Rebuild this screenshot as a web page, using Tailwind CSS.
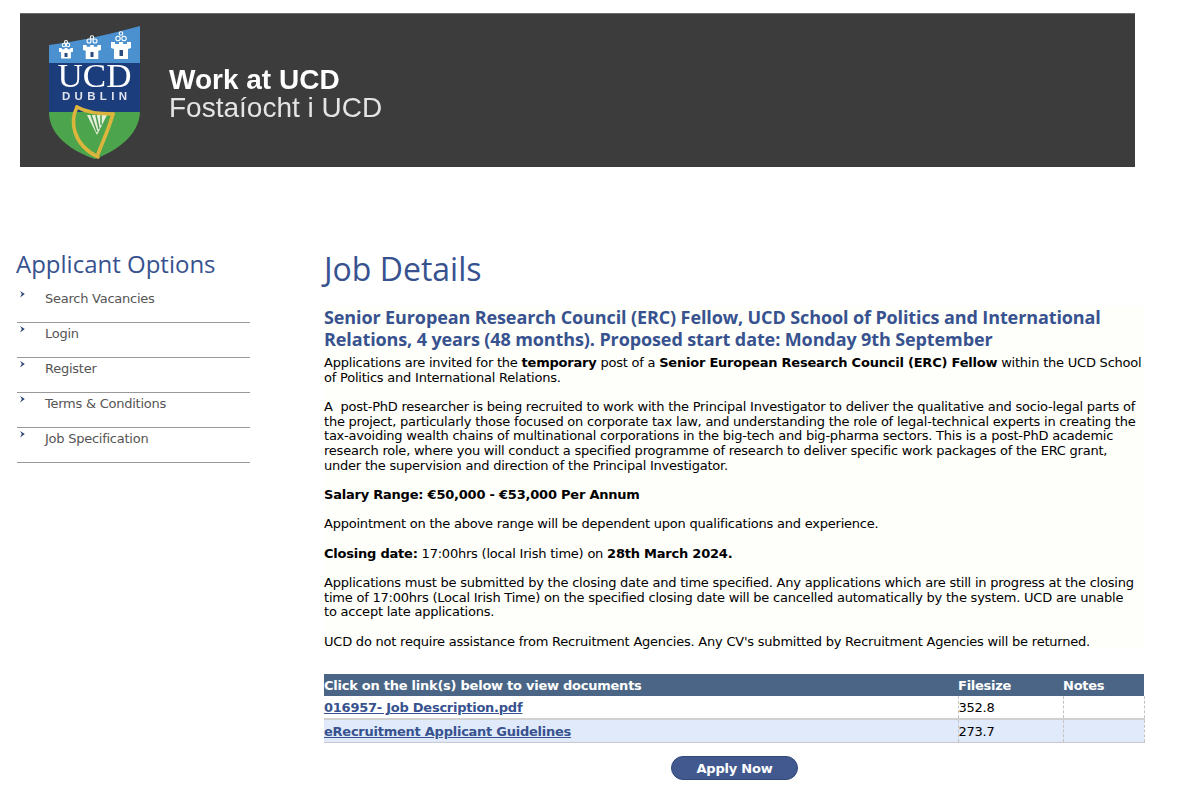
<!DOCTYPE html>
<html lang="en">
<head>
<meta charset="utf-8">
<title>Job Details</title>
<script src="https://cdn.jsdelivr.net/npm/@tailwindcss/browser@4"></script>
</head>
<body class="bg-white font-['DejaVu_Sans',sans-serif] text-black overflow-hidden">
<div class="w-[1200px] h-[810px] overflow-hidden">
  <header class="ml-5 mt-[13px] w-[1115px] h-[154px] bg-[#3c3c3c] flex items-start border-t border-[#6a6a6a]">
    <svg class="ml-[28px] mt-[12px] shrink-0 blur-[0.4px]" width="93" height="136" viewBox="0 0 93 136" aria-label="UCD Dublin crest">
      <defs><clipPath id="shield"><path d="M1 19 Q42 14 92 0 L92 86 C91 110 68 125 47 133 C24 125 1 110 1 86 Z"/></clipPath></defs>
      <g clip-path="url(#shield)">
        <rect width="93" height="37" fill="#4b91cf"/>
        <rect y="37" width="93" height="49" fill="#1c3d7c"/>
        <rect y="86" width="93" height="50" fill="#4ca54c"/>
      </g>
      <g fill="#fff">
        <path transform="translate(11,22) scale(0.7,0.62)" d="M0 0 H4 V2 H8 V0 H12 V2 H16 V0 H20 V6 L17 7 V17 H3 V7 L0 6 Z"/>
        <path transform="translate(35,19) scale(0.9,0.82)" d="M0 0 H4 V2 H8 V0 H12 V2 H16 V0 H20 V6 L17 7 V17 H3 V7 L0 6 Z"/>
        <path transform="translate(63,16)" d="M0 0 H4 V2 H8 V0 H12 V2 H16 V0 H20 V6 L17 7 V17 H3 V7 L0 6 Z"/>
      </g>
      <g fill="#2a4a80">
        <rect x="16.500" y="27" width="3" height="4"/>
        <rect x="42.500" y="26" width="3" height="5"/>
        <rect x="71.500" y="24" width="3.500" height="6"/>
      </g>
      <g fill="none" stroke="#fff" stroke-width="1.100">
        <circle cx="16" cy="19" r="1.700"/><circle cx="20" cy="19" r="1.700"/><circle cx="18" cy="16" r="1.500"/>
        <circle cx="41" cy="15" r="2"/><circle cx="47" cy="15" r="2"/><circle cx="44" cy="11.500" r="1.700"/>
        <circle cx="70" cy="12.500" r="2.200"/><circle cx="76" cy="12.500" r="2.200"/><circle cx="73" cy="7.500" r="1.800"/>
      </g>
      <text x="46.500" y="61" text-anchor="middle" fill="#fff" font-family="'Liberation Serif',serif" font-size="33" textLength="74" lengthAdjust="spacingAndGlyphs">UCD</text>
      <text x="46.500" y="74" text-anchor="middle" fill="#dfe3ee" font-family="'Liberation Sans',sans-serif" font-weight="700" font-size="11.500" textLength="65" lengthAdjust="spacing">DUBLIN</text>
      <path d="M39 89 H59 L49 109 Z" fill="#e6f0dc"/>
      <g stroke="#4f9c50" stroke-width="1.500"><path d="M43 89 L49 106"/><path d="M48 89 L51 103"/><path d="M53 89 L53 99"/></g>
      <g fill="none" stroke="#dcb63c" stroke-width="3.600" stroke-linecap="round">
        <path d="M29 81 C36 85 50 88 65 88"/>
        <path d="M29 81 C22 95 24 118 50 131"/>
        <path d="M65 88 C60 105 55 115 50 128"/>
      </g>
    </svg>
    <div class="ml-7 mt-[52px] font-['Liberation_Sans',sans-serif] text-white leading-[28px] blur-[0.3px]">
      <div class="text-[28px] font-bold">Work at UCD</div>
      <div class="text-[28px] text-[#e4e4e4]">Fostaíocht i UCD</div>
    </div>
  </header>

  <div class="flex mt-[79px]">
    <aside class="w-[324px] shrink-0 pl-4">
      <h2 class="font-['Open_Sans',sans-serif] text-[24px] leading-[36px] text-[#37528f]">Applicant Options</h2>
      <ul class="w-[233px] mt-[6px] ml-[1px] text-[13px] tracking-[-0.25px] text-[#555]">
        <li class="h-[35px] border-b border-[#999] flex items-start pl-[3px]"><svg class="mt-[3px]" width="5" height="7" viewBox="0 0 5 7"><path d="M0 0 L4.800 3 L0 6.500 L1.800 3 Z" fill="#2c4478"/></svg><span class="ml-5 leading-[16px] mt-[3px]">Search Vacancies</span></li>
        <li class="h-[35px] border-b border-[#999] flex items-start pl-[3px]"><svg class="mt-[3px]" width="5" height="7" viewBox="0 0 5 7"><path d="M0 0 L4.800 3 L0 6.500 L1.800 3 Z" fill="#2c4478"/></svg><span class="ml-5 leading-[16px] mt-[3px]">Login</span></li>
        <li class="h-[35px] border-b border-[#999] flex items-start pl-[3px]"><svg class="mt-[3px]" width="5" height="7" viewBox="0 0 5 7"><path d="M0 0 L4.800 3 L0 6.500 L1.800 3 Z" fill="#2c4478"/></svg><span class="ml-5 leading-[16px] mt-[3px]">Register</span></li>
        <li class="h-[35px] border-b border-[#999] flex items-start pl-[3px]"><svg class="mt-[3px]" width="5" height="7" viewBox="0 0 5 7"><path d="M0 0 L4.800 3 L0 6.500 L1.800 3 Z" fill="#2c4478"/></svg><span class="ml-5 leading-[16px] mt-[3px]">Terms &amp; Conditions</span></li>
        <li class="h-[35px] border-b border-[#999] flex items-start pl-[3px]"><svg class="mt-[3px]" width="5" height="7" viewBox="0 0 5 7"><path d="M0 0 L4.800 3 L0 6.500 L1.800 3 Z" fill="#2c4478"/></svg><span class="ml-5 leading-[16px] mt-[3px]">Job Specification</span></li>
      </ul>
    </aside>

    <main class="w-[820px] shrink-0 mt-[1px]">
      <h1 class="font-['Open_Sans',sans-serif] text-[32px] leading-[44px] text-[#37528f]">Job Details</h1>
      <div class="mt-[15px] bg-[#fefefa] w-[820px]">
        <h3 class="text-[18px] leading-[22px] font-bold tracking-[-0.11px] font-['Open_Sans',sans-serif] text-[#37528f]">Senior European Research Council (ERC) Fellow, UCD School of Politics and International<br>Relations, 4 years (48 months). Proposed start date: Monday 9th September</h3>
        <div class="mt-[6px] text-[13px] leading-[14.67px] tracking-[-0.22px] whitespace-nowrap">
          <p>Applications are invited for the <b>temporary</b> post of a <b>Senior European Research Council (ERC) Fellow</b> within the UCD School<br>of Politics and International Relations.</p>
          <p class="mt-[14.67px]">A&nbsp; post-PhD researcher is being recruited to work with the Principal Investigator to deliver the qualitative and socio-legal parts of<br>the project, particularly those focused on corporate tax law, and understanding the role of legal-technical experts in creating the<br>tax-avoiding wealth chains of multinational corporations in the big-tech and big-pharma sectors. This is a post-PhD academic<br>research role, where you will conduct a specified programme of research to deliver specific work packages of the ERC grant,<br>under the supervision and direction of the Principal Investigator.</p>
          <p class="mt-[14.67px] font-bold">Salary Range: €50,000 - €53,000 Per Annum</p>
          <p class="mt-[14.67px]">Appointment on the above range will be dependent upon qualifications and experience.</p>
          <p class="mt-[14.67px]"><b>Closing date:</b> 17:00hrs (local Irish time) on <b>28th March 2024.</b></p>
          <p class="mt-[14.67px]">Applications must be submitted by the closing date and time specified. Any applications which are still in progress at the closing<br>time of 17:00hrs (Local Irish Time) on the specified closing date will be cancelled automatically by the system. UCD are unable<br>to accept late applications.</p>
          <p class="mt-[14.67px]">UCD do not require assistance from Recruitment Agencies. Any CV's submitted by Recruitment Agencies will be returned.</p>
        </div>
      </div>
      <table class="mt-[25px] w-[820px] table-fixed border-collapse text-[13px] tracking-[-0.25px]">
        <colgroup><col class="w-[634px]"><col class="w-[105px]"><col class="w-[81px]"></colgroup>
        <thead>
          <tr class="bg-[#4a6585] text-white h-[22px] text-left">
            <th class="p-0 font-bold">Click on the link(s) below to view documents</th>
            <th class="p-0 font-bold">Filesize</th>
            <th class="p-0 font-bold">Notes</th>
          </tr>
        </thead>
        <tbody>
          <tr class="h-[23px] bg-white border-b-2 border-[#d0d0d0]">
            <td class="p-0 pt-[1px] border-r border-dashed border-[#c4c4c4]"><a href="#" class="font-bold underline text-[#37528f]">016957- Job Description.pdf</a></td>
            <td class="p-0 pt-[1px] border-r border-dashed border-[#c4c4c4]">352.8</td>
            <td class="p-0 border-r border-dashed border-[#c4c4c4]"></td>
          </tr>
          <tr class="h-[23px] bg-[#e1eafa] border-b border-[#c8c8d0]">
            <td class="p-0 pt-[1px] border-r border-dashed border-[#c4c4c4]"><a href="#" class="font-bold underline text-[#37528f]">eRecruitment Applicant Guidelines</a></td>
            <td class="p-0 pt-[1px] border-r border-dashed border-[#c4c4c4]">273.7</td>
            <td class="p-0 border-r border-dashed border-[#c4c4c4]"></td>
          </tr>
        </tbody>
      </table>
      <div class="mt-[13px] pl-[347px]">
        <button class="w-[127px] h-[24px] rounded-[12px] bg-[#41598f] border border-[#33487a] text-white text-[13px] tracking-[-0.2px] font-bold leading-none">Apply Now</button>
      </div>
    </main>
  </div>
</div>
</body>
</html>
